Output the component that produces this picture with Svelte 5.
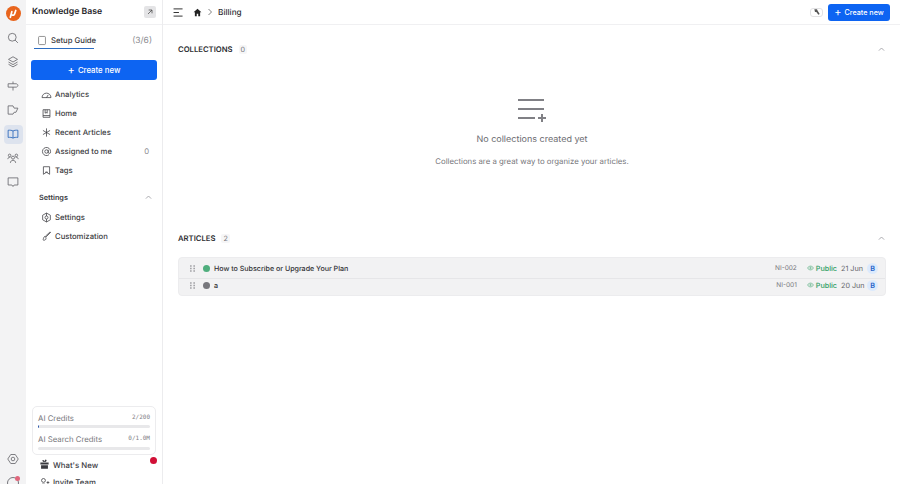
<script>
  const navItems = [
    { label: 'Analytics', icon: 'gauge' },
    { label: 'Home', icon: 'book' },
    { label: 'Recent Articles', icon: 'star' },
    { label: 'Assigned to me', icon: 'at', count: 0 },
    { label: 'Tags', icon: 'tag' }
  ];
  const settingsItems = [
    { label: 'Settings', icon: 'gear' },
    { label: 'Customization', icon: 'brush' }
  ];
  const articles = [
    { title: 'How to Subscribe or Upgrade Your Plan', status: 'published', code: 'NI-002', date: '21 Jun' },
    { title: 'a', status: 'draft', code: 'NI-001', date: '20 Jun' }
  ];
  const icons = {
    gauge: 'M1.500 12.500a6.500 6.500 0 1 1 13 0zM8 12.500l2.500-4M4.500 9h.01',
    book: 'M3 2.500h10v11H3zM3 11h10M6 2.500v5l1.500-1 1.500 1v-5',
    star: 'M8 2v12M2.800 5l10.400 6M13.200 5 2.800 11',
    at: 'M10.500 8a2.500 2.500 0 1 1-5 0 2.500 2.500 0 0 1 5 0zM10.500 5.500V9a1.700 1.700 0 0 0 3.400 0V8a5.900 5.900 0 1 0-2.300 4.700',
    tag: 'M3.500 2.500h9v11l-4.500-3-4.500 3zM6 10.500h4',
    gear: 'M8 1.500l5.600 3.200v6.600L8 14.500l-5.600-3.200V4.700zM10.200 8a2.200 2.200 0 1 1-4.400 0 2.200 2.200 0 0 1 4.400 0zM8 1.500v4.300M8 10.200v4.300',
    brush: 'M14 2 7.500 8.500l-1-1L13 1.500zM6 8c-2 0-2 2-3 4.500-.3 1 3 1.500 4-.5.500-1 .500-2.500-1-4'
  };
</script>

<div class="app">
  <nav class="rail">
    <div class="logo">
      <svg viewBox="0 0 20 20" width="15" height="15"><circle class="disc" cx="10" cy="10" r="10" /><path class="mark" d="M5.800 15 7.800 7.500M8 12c1.500.5 3 .5 3.500-1.500L13 6" /></svg>
    </div>
    <button class="rail-btn" aria-label="Search"><svg viewBox="0 0 16 16"><circle cx="7" cy="7" r="5.200" /><path d="m10.800 10.800 3.700 3.700" /></svg></button>
    <button class="rail-btn" aria-label="Layers"><svg viewBox="0 0 16 16"><path d="M8 1 14 4.500 8 8 2 4.500zM2 8l6 3.500L14 8M2 11l6 3.500 6-3.500" /></svg></button>
    <button class="rail-btn" aria-label="Signpost"><svg viewBox="0 0 16 16"><path d="M1.500 5h11l2.500 2.300-2.500 2.200h-11zM8 2v3M8 9.500V14" /></svg></button>
    <button class="rail-btn" aria-label="Campaigns"><svg viewBox="0 0 16 16"><path d="M1.500 2.500h6.500l1.500 3H14.500L12 11H9.500L8 13.500H1.500z" /></svg></button>
    <button class="rail-btn active" aria-label="Knowledge base"><svg viewBox="0 0 16 16"><path d="M8 4C6.500 3 4 2.800 1.500 3v9.500C4 12.300 6.500 12.500 8 13.500c1.500-1 4-1.200 6.500-1V3C12 2.800 9.500 3 8 4zM8 4v9.500" /></svg></button>
    <button class="rail-btn" aria-label="Team"><svg viewBox="0 0 16 16"><circle cx="8" cy="7.500" r="2" /><circle cx="3.500" cy="4.500" r="1.700" /><circle cx="12.500" cy="4.500" r="1.700" /><path d="M4.500 14.500c0-4.500 7-4.500 7 0M1 9.500c0-2 2-2.500 3.500-2.300M15 9.500c0-2-2-2.500-3.500-2.300" /></svg></button>
    <button class="rail-btn" aria-label="Messages"><svg viewBox="0 0 16 16"><path d="M1.500 2.500h13v9.500H9.500L8 14 6.500 12h-5z" /></svg></button>
    <div class="rail-bottom">
      <button class="rail-btn" aria-label="Settings"><svg viewBox="0 0 16 16"><path d="M5 2h6l4 6-4 6H5L1 8z" /><circle cx="8" cy="8" r="2.400" /></svg></button>
      <div class="rail-user"><span class="user-dot"></span></div>
    </div>
  </nav>

  <aside class="sidebar">
    <header class="side-head">
      <span class="side-title">Knowledge Base</span>
      <button class="expand" aria-label="Open"><svg viewBox="0 0 12 12" width="8" height="8"><path d="M3 9l6-6M4 3h5v5" /></svg></button>
    </header>

    <div class="guide">
      <div class="guide-label">
        <svg viewBox="0 0 16 16" width="10" height="11"><rect x="2.500" y="1.500" width="11" height="13" rx="1.500" /></svg>
        <span>Setup Guide</span>
      </div>
      <span class="guide-count">(3/6)</span>
    </div>

    <button class="primary wide"><span class="plus">+</span> Create new</button>

    <ul class="menu">
      {#each navItems as item}
        <li>
          <svg viewBox="0 0 16 16" width="11" height="11"><path d={icons[item.icon]} /></svg>
          <span>{item.label}</span>
          {#if item.count !== undefined}<em>{item.count}</em>{/if}
        </li>
      {/each}
    </ul>

    <div class="group-head">
      <span>Settings</span>
      <svg viewBox="0 0 12 12" width="9" height="9"><path d="m2.500 7.500 3.500-3.500 3.500 3.500" /></svg>
    </div>

    <ul class="menu">
      {#each settingsItems as item}
        <li>
          <svg viewBox="0 0 16 16" width="11" height="11"><path d={icons[item.icon]} /></svg>
          <span>{item.label}</span>
        </li>
      {/each}
    </ul>

    <div class="side-bottom">
      <div class="credits">
        <div class="credit-row"><span>AI Credits</span><code>2/200</code></div>
        <div class="meter first"><i style="width: 1%"></i></div>
        <div class="credit-row second"><span>AI Search Credits</span><code>0/1.0M</code></div>
        <div class="meter"></div>
      </div>
      <div class="foot-link news">
        <svg viewBox="0 0 16 16" width="11" height="11"><path class="solid" d="M2 5h12v3H2zM3 9h10v5H3zM5 2c1-1 3 0 3 2.500C8 2 10-1 11 2c.5 1.500-2 2.500-3 2.500S4.500 3.500 5 2z" /></svg>
        <span>What's New</span>
        <b class="red-dot"></b>
      </div>
      <div class="foot-link">
        <svg viewBox="0 0 16 16" width="11" height="11"><circle cx="6.500" cy="5" r="2.800" /><path d="M1.500 14c0-5 10-5 10 0M13 6v4M11 8h4" /></svg>
        <span>Invite Team</span>
      </div>
    </div>
  </aside>

  <main class="main">
    <header class="topbar">
      <button class="icon-plain" aria-label="Menu"><svg viewBox="0 0 12 10" width="11" height="9"><path d="M.5 1h10M.5 5h6M.5 9h10" /></svg></button>
      <svg class="home" viewBox="0 0 12 12" width="9" height="9"><path d="M6 1 .8 5.800h1.700V11h2.500V7.800h2V11h2.500V5.800h1.700z" /></svg>
      <svg class="crumb-sep" viewBox="0 0 8 10" width="6" height="8"><path d="m2 1 4 4-4 4" /></svg>
      <span class="crumb">Billing</span>
      <div class="top-actions">
        <button class="mini" aria-label="Translate"><svg viewBox="0 0 12 12" width="8" height="8"><path class="solid" d="M2 2h4l1 2 3 5-2 1-3-4H3z" /></svg></button>
        <button class="primary small"><span class="plus">+</span> Create new</button>
      </div>
    </header>

    <section class="collections">
      <div class="section-head">
        <h2>COLLECTIONS</h2><span class="badge">0</span>
        <svg viewBox="0 0 12 12" width="9" height="9"><path d="m2.500 7.500 3.500-3.500 3.500 3.500" /></svg>
      </div>
      <div class="empty">
        <svg viewBox="0 0 30 26" width="30" height="26"><path d="M1 2h26M1 11h26M1 20h17M21 20h8M25 16v8" /></svg>
        <h3>No collections created yet</h3>
        <p>Collections are a great way to organize your articles.</p>
      </div>
    </section>

    <section class="articles">
      <div class="section-head">
        <h2>ARTICLES</h2><span class="badge">2</span>
        <svg viewBox="0 0 12 12" width="9" height="9"><path d="m2.500 7.500 3.500-3.500 3.500 3.500" /></svg>
      </div>
      <div class="list">
        {#each articles as a}
          <div class="row">
            <svg class="grip" viewBox="0 0 6 8" width="5" height="7"><path class="solid" d="M0 0h2v2H0zM4 0h2v2H4zM0 3h2v2H0zM4 3h2v2H4zM0 6h2v2H0zM4 6h2v2H4z" /></svg>
            <span class="status {a.status}"></span>
            <span class="title">{a.title}</span>
            <span class="code">{a.code}</span>
            <span class="public">
              <svg viewBox="0 0 14 10" width="7" height="6"><path d="M1 5c3-5 9-5 12 0-3 5-9 5-12 0z" /><circle cx="7" cy="5" r="1.500" /></svg>
              Public
            </span>
            <span class="date">{a.date}</span>
            <span class="avatar">B</span>
          </div>
        {/each}
      </div>
    </section>
  </main>
</div>

<style>
  :global(body) {
    margin: 0;
    background: #fff;
    font-family: Inter, "Liberation Sans", sans-serif;
    color: #2b2b2f;
    text-rendering: geometricPrecision;
  }

  svg {
    fill: none;
    stroke: currentColor;
    stroke-width: 1.100;
    flex: none;
  }

  svg .solid,
  svg.home {
    fill: currentColor;
    stroke: none;
  }

  .logo .disc {
    fill: #e8641c;
    stroke: none;
  }

  .logo .mark {
    stroke: #fff;
    stroke-width: 2.300;
    stroke-linecap: round;
    stroke-linejoin: round;
  }

  button {
    font: inherit;
    border: none;
    background: none;
    padding: 0;
    color: inherit;
  }

  .app {
    display: flex;
    height: 484px;
    overflow: hidden;
  }

  /* icon rail */
  .rail {
    width: 26px;
    flex: none;
    background: #f3f3f4;
    display: flex;
    flex-direction: column;
    align-items: center;
    padding-top: 5px;
    box-sizing: border-box;
    color: #66666b;
  }

  .logo {
    height: 15px;
    margin-bottom: 6px;
  }

  .rail-btn {
    width: 19px;
    height: 19px;
    margin: 2.500px 0;
    border-radius: 4px;
    display: flex;
    align-items: center;
    justify-content: center;
  }

  .rail-btn svg {
    width: 12px;
    height: 12px;
  }

  .rail-btn.active {
    background: #dde3ee;
    color: #2563b8;
  }

  .rail-bottom {
    margin-top: auto;
    display: flex;
    flex-direction: column;
    align-items: center;
    margin-bottom: -5px;
  }

  .rail-user {
    width: 12px;
    height: 12px;
    margin-top: 6px;
    border: 1px solid #77777c;
    border-radius: 50%;
    position: relative;
    box-sizing: border-box;
  }

  .user-dot {
    position: absolute;
    top: -2px;
    right: -2px;
    width: 5px;
    height: 5px;
    border-radius: 50%;
    background: #e0667c;
  }

  /* sidebar */
  .sidebar {
    width: 137px;
    flex: none;
    box-sizing: border-box;
    border-right: 1px solid #ececee;
    display: flex;
    flex-direction: column;
  }

  .side-head {
    height: 25px;
    flex: none;
    box-sizing: border-box;
    border-bottom: 1px solid #f0f0f2;
    display: flex;
    align-items: center;
    justify-content: space-between;
    padding: 0 6px 0 6px;
  }

  .side-title {
    font-size: 8.700px;
    font-weight: 600;
    color: #26262a;
  }

  .expand {
    width: 12px;
    height: 12px;
    background: #e4e4e6;
    border-radius: 2px;
    display: flex;
    align-items: center;
    justify-content: center;
    color: #444;
  }

  .guide {
    display: flex;
    justify-content: space-between;
    align-items: center;
    margin: 8px 10px 0 8px;
    height: 15px;
    font-size: 7.700px;
  }

  .guide-label {
    display: flex;
    align-items: center;
    gap: 4px;
    color: #37373b;
    font-weight: 500;
    height: 15px;
    padding: 0 2px 0 3px;
    margin-bottom: -1px;
    width: 55px;
    border-bottom: 1.500px solid #2c6cc0;
    white-space: nowrap;
  }

  .guide-label svg {
    color: #666;
  }

  .guide-count {
    color: #8b8b90;
    font-size: 8.500px;
  }

  .primary {
    background: #0d64f2;
    color: #fff;
    border-radius: 3px;
    font-weight: 500;
    display: flex;
    align-items: center;
    justify-content: center;
    gap: 3px;
  }

  .plus {
    font-size: 11px;
    line-height: 1;
    font-weight: 400;
  }

  .primary.wide {
    margin: 12px 5px 0 5px;
    height: 20px;
    font-size: 7.800px;
  }

  .primary.small {
    width: 62px;
    height: 17px;
    font-size: 7.200px;
  }

  .menu {
    list-style: none;
    margin: 5px 0 0;
    padding: 0 13px 0 15px;
  }

  .menu li {
    height: 19px;
    display: flex;
    align-items: center;
    gap: 3px;
    font-size: 7.700px;
    color: #3c3c41;
    font-weight: 500;
  }

  .menu li em {
    margin-left: auto;
    font-style: normal;
    font-weight: 400;
    color: #8b8b90;
  }

  .group-head {
    display: flex;
    justify-content: space-between;
    align-items: center;
    padding: 0 9px 0 13px;
    margin-top: 8px;
    height: 19px;
    font-size: 7.300px;
    font-weight: 600;
    color: #3a3a3f;
  }

  .group-head svg,
  .section-head svg {
    color: #9a9aa0;
  }

  .group-head + .menu {
    margin-top: 1px;
  }

  .side-bottom {
    margin-top: auto;
    margin-bottom: -7px;
  }

  .credits {
    margin: 0 6px;
    border: 1px solid #ececee;
    border-radius: 5px;
    padding: 5px 5px 5px 5px;
    height: 49px;
    box-sizing: border-box;
  }

  .credit-row {
    display: flex;
    justify-content: space-between;
    align-items: center;
    font-size: 7.800px;
    color: #77777c;
    height: 11px;
  }

  .credit-row.second {
    margin-top: 5px;
  }

  .credit-row code {
    font-family: "DejaVu Sans Mono", "Liberation Mono", monospace;
    font-size: 6px;
    color: #808085;
  }

  .meter {
    height: 3px;
    margin-top: 3px;
    border-radius: 2px;
    background: #e8e8ea;
    overflow: hidden;
  }

  .meter.first {
    margin-top: 2px;
  }

  .meter i {
    display: block;
    height: 100%;
    background: #1f4fa8;
  }

  .foot-link {
    position: relative;
    height: 18px;
    display: flex;
    align-items: center;
    gap: 3px;
    padding-left: 13px;
    font-size: 7.800px;
    font-weight: 500;
    color: #3a3a3f;
  }

  .foot-link.news {
    padding-top: 1px;
    box-sizing: border-box;
  }

  .red-dot {
    position: absolute;
    top: 2px;
    right: 5px;
    width: 7px;
    height: 7px;
    border-radius: 50%;
    background: #d10f36;
  }

  /* main */
  .main {
    flex: 1;
    min-width: 0;
  }

  .topbar {
    height: 25px;
    box-sizing: border-box;
    border-bottom: 1px solid #f0f0f2;
    display: flex;
    align-items: center;
    padding: 0 10px 0 10px;
    font-size: 8.200px;
  }

  .icon-plain {
    display: flex;
    color: #333;
  }

  .home {
    margin-left: 9px;
    color: #222;
  }

  .crumb-sep {
    margin-left: 5px;
    color: #666;
  }

  .crumb {
    margin-left: 5px;
    font-weight: 500;
    color: #303034;
  }

  .top-actions {
    margin-left: auto;
    display: flex;
    align-items: center;
    gap: 5px;
  }

  .mini {
    width: 13px;
    height: 9px;
    border: 1px solid #e2e2e4;
    border-radius: 3px;
    display: flex;
    align-items: center;
    justify-content: center;
    color: #555;
  }

  .collections,
  .articles {
    padding: 0 14px 0 15px;
  }

  .collections {
    height: 189px;
    box-sizing: border-box;
    padding-top: 17px;
  }

  .section-head {
    height: 14px;
    display: flex;
    align-items: center;
    gap: 6px;
  }

  .section-head h2 {
    margin: 0;
    font-size: 7.700px;
    font-weight: 600;
    color: #2e2e32;
  }

  .section-head .badge {
    font-size: 7.200px;
    color: #77777c;
    padding: 0 2px;
    background: #f6f6f7;
    border-radius: 2px;
  }

  .section-head svg {
    margin-left: auto;
  }

  .empty {
    display: flex;
    flex-direction: column;
    align-items: center;
    margin-top: 42px;
    color: #808085;
  }

  .empty svg {
    stroke-width: 2;
  }

  .empty h3 {
    margin: 10px 0 0;
    font-size: 9px;
    font-weight: 400;
    color: #6d6d72;
  }

  .empty p {
    margin: 11px 0 0;
    font-size: 7.800px;
    color: #77777c;
  }

  .articles {
    padding-top: 17px;
  }

  .list {
    margin-top: 12px;
    background: #f2f2f3;
    border: 1px solid #ececee;
    border-radius: 4px;
  }

  .row {
    height: 20px;
    display: flex;
    align-items: center;
    padding: 0 7px 0 11px;
    font-size: 7.100px;
    color: #2e2e32;
  }

  .row + .row {
    height: 12px;
    border-top: 1px solid #e6e6e8;
    padding-bottom: 4px;
  }

  .grip {
    color: #a4a4a8;
  }

  .status {
    width: 7px;
    height: 7px;
    border-radius: 50%;
    margin-left: 8px;
  }

  .status.published {
    background: #4fae7d;
  }

  .status.draft {
    background: #77777c;
  }

  .title {
    margin-left: 4px;
    font-weight: 500;
  }

  .code {
    margin-left: auto;
    font-size: 6.500px;
    color: #77777c;
  }

  .public {
    margin-left: 10px;
    display: flex;
    align-items: center;
    gap: 2px;
    color: #2f9e63;
    font-weight: 500;
    font-size: 7.200px;
  }

  .date {
    margin-left: 4px;
    width: 24px;
    color: #66666b;
    font-size: 7.200px;
    white-space: nowrap;
  }

  .avatar {
    margin-left: 2px;
    width: 11px;
    height: 11px;
    border-radius: 50%;
    background: #dceafc;
    color: #1f63c8;
    font-size: 7.200px;
    font-weight: 600;
    display: flex;
    align-items: center;
    justify-content: center;
  }
</style>
